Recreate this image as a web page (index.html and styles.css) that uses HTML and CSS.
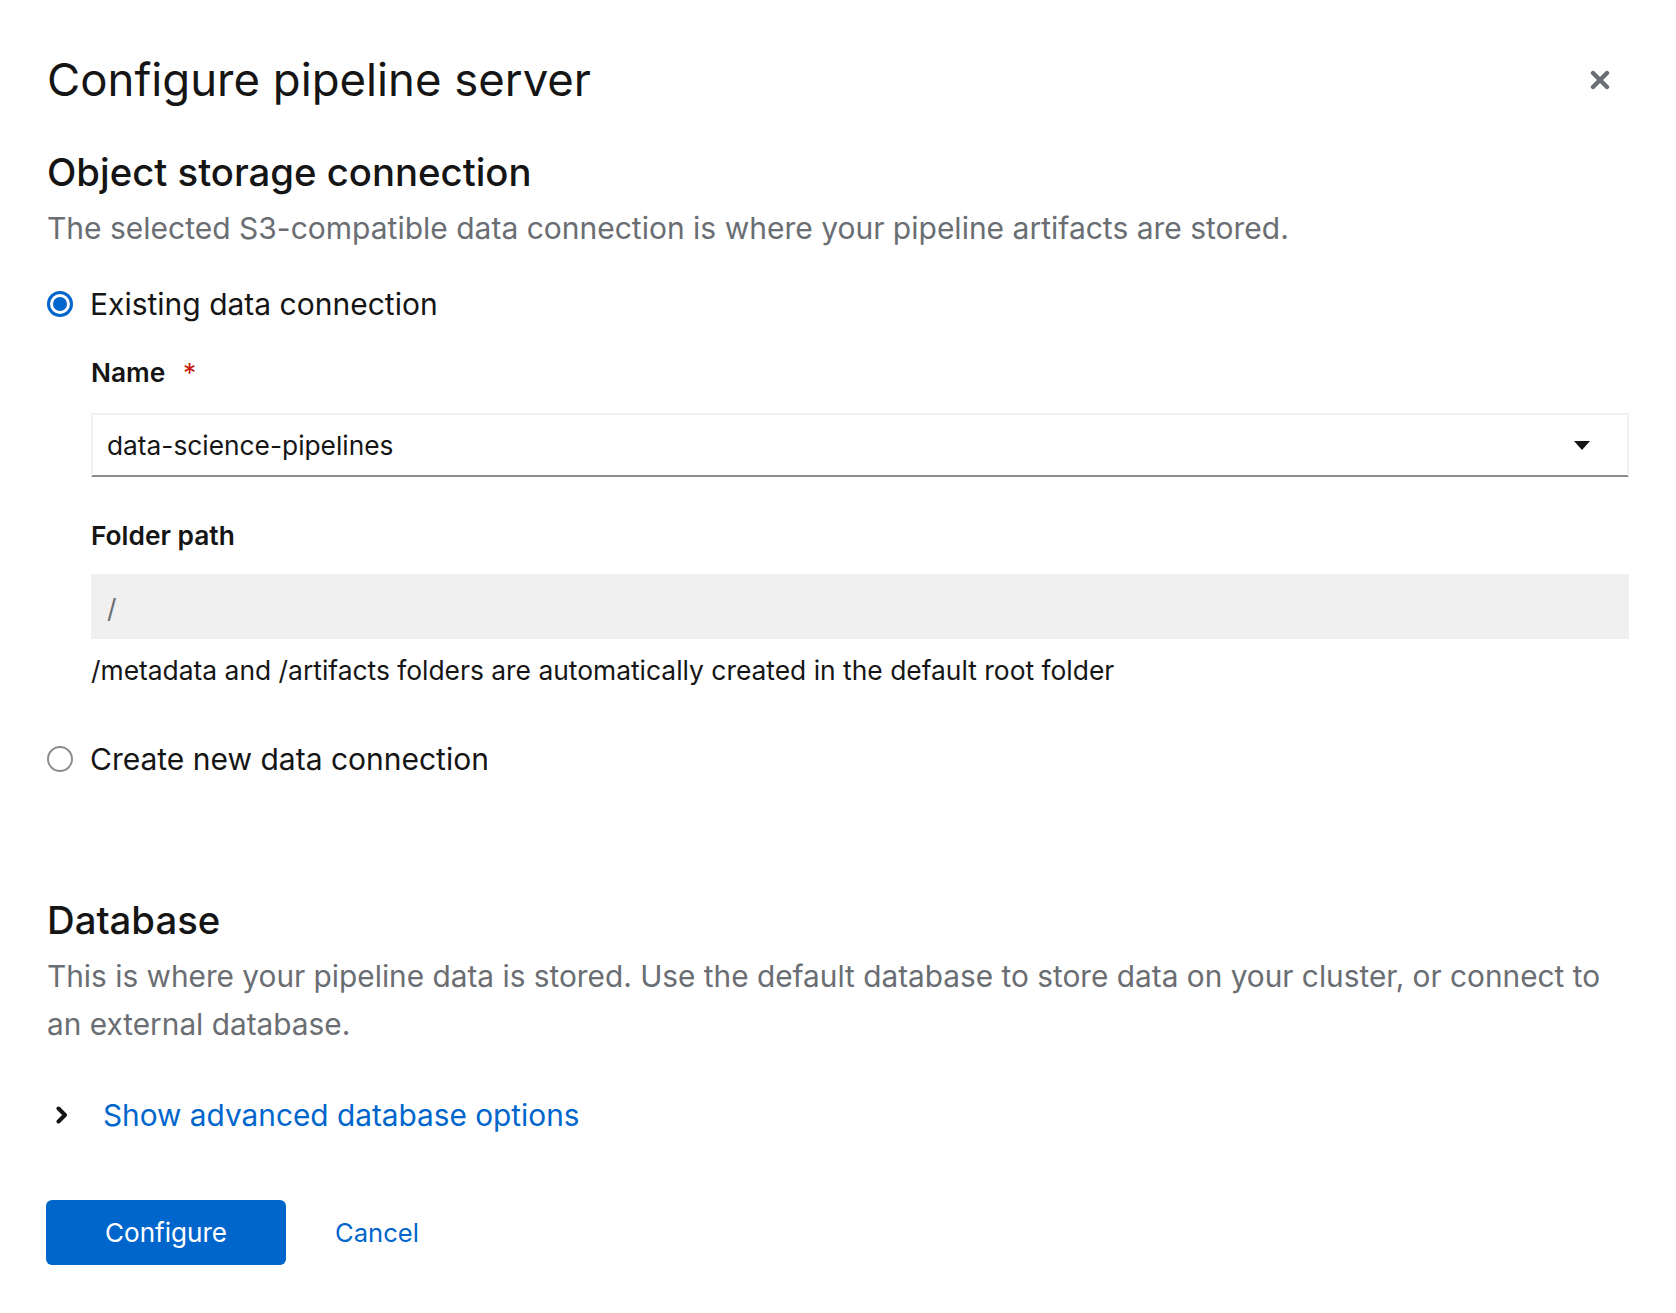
FILE: index.html
```html
<!DOCTYPE html>
<html lang="en">
<head>
<meta charset="utf-8">
<title>Configure pipeline server</title>
<link rel="stylesheet" href="styles.css">
</head>
<body>
<div class="modal">
  <button class="close" aria-label="Close">
    <svg viewBox="0 0 20 20" width="20" height="20"><path d="M3 3 L17 17 M17 3 L3 17" stroke="#6a6e73" stroke-width="4.4" stroke-linecap="round"/></svg>
  </button>
  <h1 class="title">Configure pipeline server</h1>

  <section class="section section-storage">
    <h2 class="heading">Object storage connection</h2>
    <p class="desc">The selected S3-compatible data connection is where your pipeline artifacts are stored.</p>

    <div class="radio-row radio-first">
      <span class="radio radio-checked"></span>
      <span class="radio-label">Existing data connection</span>
    </div>

    <div class="nested">
      <div class="label label-name">Name <span class="req">*</span></div>
      <div class="select">
        <span class="select-text">data-science-pipelines</span>
        <svg class="caret" viewBox="0 0 16 9" width="16" height="9"><path d="M0 0 H16 L8 9 Z" fill="#151515"/></svg>
      </div>

      <div class="label label-folder">Folder path</div>
      <div class="input-disabled">/</div>
      <div class="helper">/metadata and /artifacts folders are automatically created in the default root folder</div>
    </div>

    <div class="radio-row radio-second">
      <span class="radio"></span>
      <span class="radio-label">Create new data connection</span>
    </div>
  </section>

  <section class="section section-db">
    <h2 class="heading">Database</h2>
    <p class="desc desc-db">This is where your pipeline data is stored. Use the default database to store data on your cluster, or connect to an external database.</p>
    <div class="expand">
      <svg class="chevron" viewBox="0 0 12 18" width="12" height="18"><path d="M2.5 2.5 L9 9 L2.5 15.5" fill="none" stroke="#151515" stroke-width="4" stroke-linecap="round" stroke-linejoin="round"/></svg>
      <span class="expand-link">Show advanced database options</span>
    </div>
  </section>

  <div class="actions">
    <button class="btn btn-primary">Configure</button>
    <button class="btn btn-link">Cancel</button>
  </div>
</div>
</body>
</html>
```
FILE: styles.css
```css
* { box-sizing: border-box; }
html, body { margin: 0; padding: 0; background: #ffffff; }
body {
  font-family: Inter, "Noto Sans", sans-serif;
  color: #151515;
}
.modal {
  position: relative;
  padding: 50px 47px 0 47px;
}
.close {
  position: absolute;
  top: 70px;
  right: 66px;
  width: 20px;
  height: 20px;
  padding: 0;
  border: 0;
  background: transparent;
  display: flex;
}
.title {
  margin: 0;
  font-size: 45.5px;
  line-height: 60px;
  font-weight: 400;
  letter-spacing: 0;
}
.heading {
  margin: 0;
  font-size: 38.3px;
  line-height: 48px;
  font-weight: 500;
}
.section-storage { margin-top: 38px; }
.desc {
  margin: 8px 0 0 0;
  font-size: 30px;
  line-height: 48px;
  color: #6a6e73;
}
.radio-row {
  display: flex;
  align-items: center;
  gap: 17px;
  height: 48px;
}
.radio-first { margin-top: 28px; }
.radio-second { margin-top: 45px; }
.radio {
  width: 26px;
  height: 26px;
  border-radius: 50%;
  border: 2px solid #8a8d90;
  background: #fff;
  flex: none;
  display: flex;
  align-items: center;
  justify-content: center;
}
.radio-checked {
  border: 3px solid #0066cc;
}
.radio-checked::after {
  content: "";
  width: 14px;
  height: 14px;
  border-radius: 50%;
  background: #0066cc;
}
.radio-label {
  font-size: 30px;
  line-height: 48px;
}
.nested {
  padding-left: 44px;
}
.label {
  font-size: 26.3px;
  line-height: 40px;
  font-weight: 600;
}
.label-name { margin-top: 25px; }
.label-folder { margin-top: 39px; }
.req {
  color: #c9190b;
  font-weight: 400;
  margin-left: 11px;
}
.select {
  margin-top: 20px;
  height: 64px;
  border: 2px solid #f0f0f0;
  border-bottom: 2px solid #8a8d90;
  display: flex;
  align-items: center;
  justify-content: space-between;
  padding: 2px 37px 0 14px;
}
.select-text {
  font-size: 26.3px;
  line-height: 40px;
}
.caret { flex: none; margin-top: -2px; }
.input-disabled {
  margin-top: 18px;
  height: 65px;
  background: #f0f0f0;
  display: flex;
  align-items: center;
  padding: 3px 0 0 16px;
  font-size: 26.3px;
  color: #6a6e73;
}
.helper {
  margin-top: 11px;
  font-size: 26.4px;
  line-height: 40px;
}
.section-db { margin-top: 113px; }
.desc-db { margin-top: 8px; font-size: 29.8px; }
.expand {
  margin-top: 43px;
  height: 48px;
  display: flex;
  align-items: center;
}
.chevron {
  margin-left: 9px;
  flex: none;
}
.expand-link {
  margin-left: 35px;
  font-size: 29.8px;
  line-height: 48px;
  color: #0066cc;
}
.actions {
  margin-top: 61px;
  display: flex;
  align-items: center;
}
.btn {
  font-family: Inter, "Noto Sans", sans-serif;
  border: 0;
  height: 65px;
  font-size: 26.1px;
  cursor: pointer;
}
.btn-primary {
  width: 240px;
  background: #0066cc;
  color: #ffffff;
  border-radius: 6px;
  margin-left: -1px;
}
.btn-link {
  background: transparent;
  color: #0066cc;
  margin-left: 49px;
  padding: 0;
  font-size: 25.6px;
}
```
